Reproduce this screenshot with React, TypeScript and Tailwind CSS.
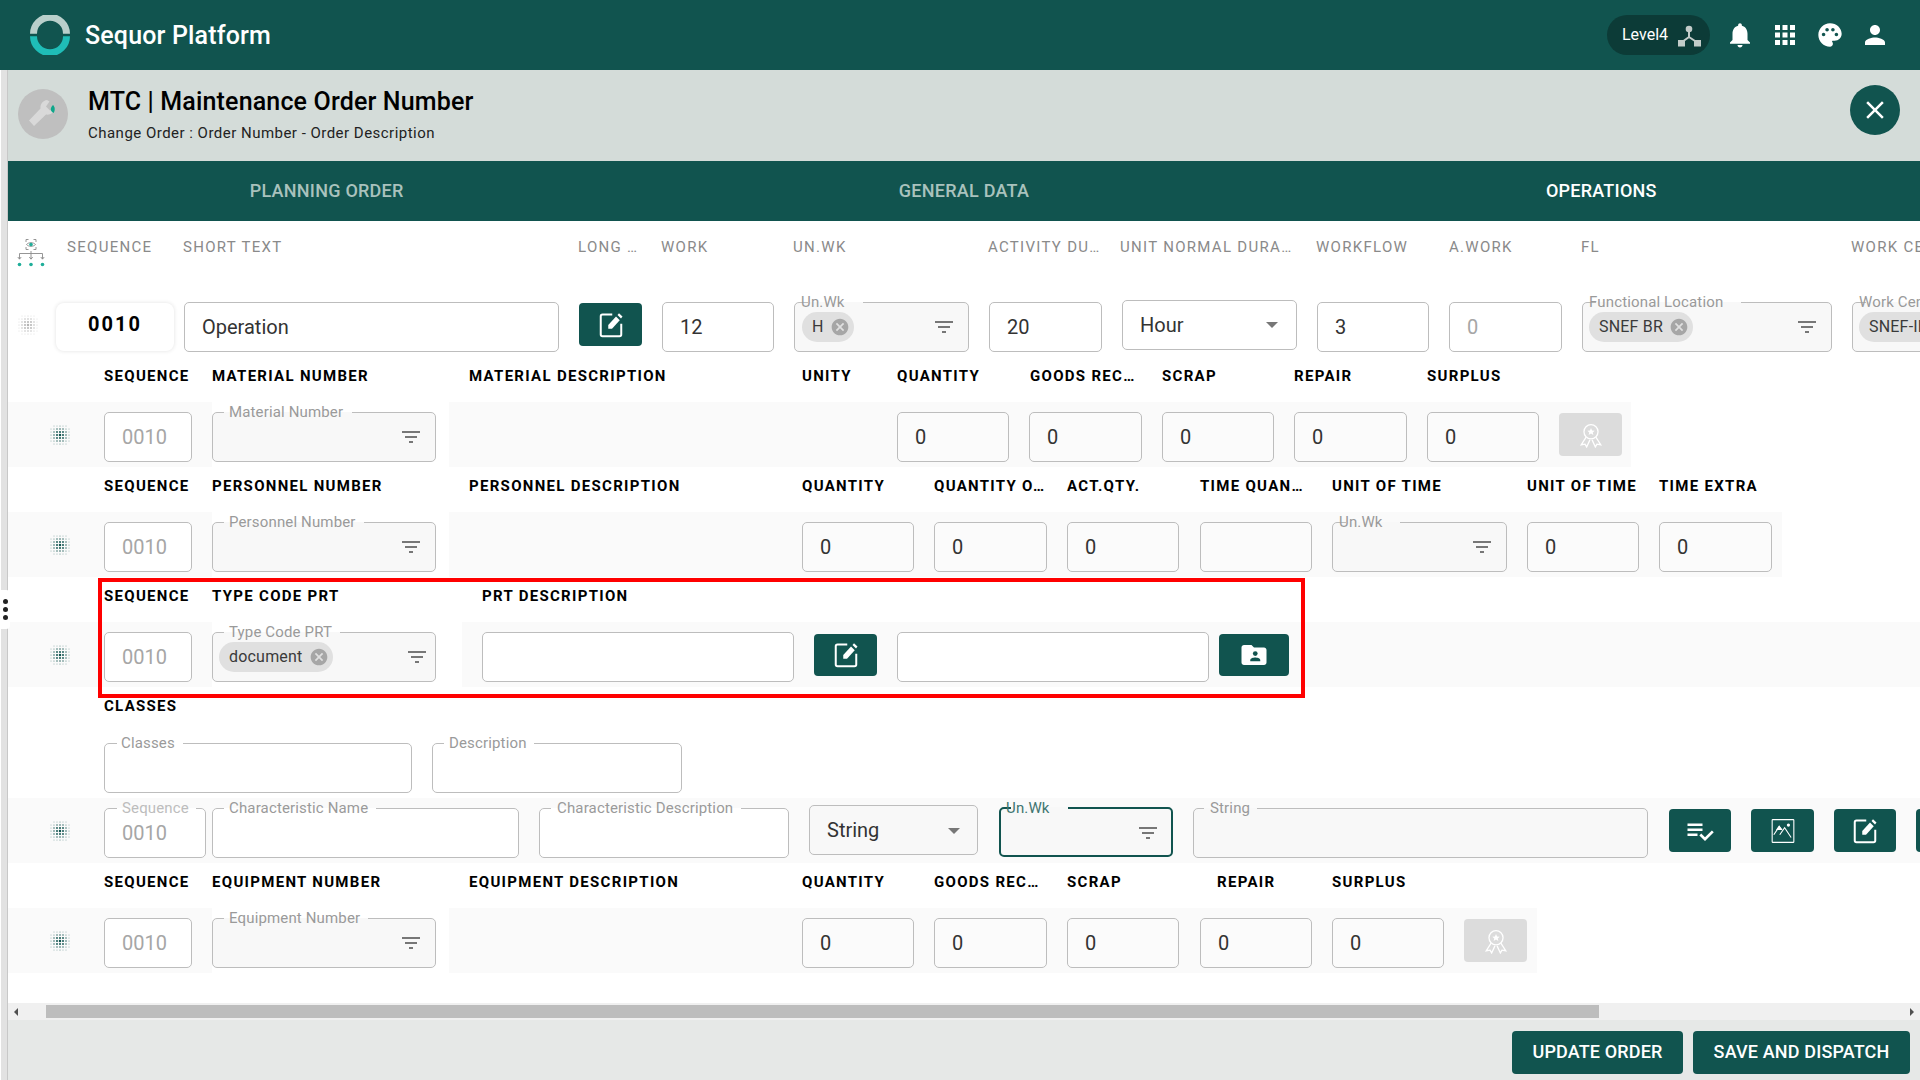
import React from "react";

const P = {
  bell: "M12 22c1.1 0 2-.9 2-2h-4c0 1.1.89 2 2 2zm6-6v-5c0-3.07-1.64-5.64-4.5-6.32V4c0-.83-.67-1.5-1.5-1.5s-1.5.67-1.5 1.5v.68C7.63 5.36 6 7.92 6 11v5l-2 2v1h16v-1l-2-2z",
  apps: "M4 8h4V4H4v4zm6 12h4v-4h-4v4zm-6 0h4v-4H4v4zm0-6h4v-4H4v4zm6 0h4v-4h-4v4zm6-10v4h4V4h-4zm-6 4h4V4h-4v4zm6 6h4v-4h-4v4zm0 6h4v-4h-4v4z",
  palette: "M12 2C6.49 2 2 6.49 2 12s4.49 10 10 10c1.38 0 2.5-1.12 2.5-2.5 0-.61-.23-1.2-.64-1.67-.08-.1-.13-.21-.13-.33 0-.28.22-.5.5-.5H16c3.31 0 6-2.69 6-6 0-4.96-4.49-9-10-9zM6.5 13c-.83 0-1.5-.67-1.5-1.5S5.67 10 6.5 10s1.5.67 1.5 1.5S7.33 13 6.5 13zm3-4C8.67 9 8 8.33 8 7.5S8.67 6 9.5 6s1.5.67 1.5 1.5S10.33 9 9.5 9zm5 0c-.83 0-1.5-.67-1.5-1.5S13.67 6 14.5 6s1.5.67 1.5 1.5S15.33 9 14.5 9zm3 4c-.83 0-1.5-.67-1.5-1.5s.67-1.5 1.5-1.5 1.5.67 1.5 1.5-.67 1.5-1.5 1.5z",
  person: "M12 12c2.21 0 4-1.79 4-4s-1.79-4-4-4-4 1.79-4 4 1.79 4 4 4zm0 2c-2.67 0-8 1.34-8 4v2h16v-2c0-2.66-5.33-4-8-4z",
  close: "M19 6.41 17.59 5 12 10.59 6.41 5 5 6.41 10.59 12 5 17.59 6.41 19 12 13.41 17.59 19 19 17.59 13.41 12z",
  cancel: "M12 2C6.47 2 2 6.47 2 12s4.47 10 10 10 10-4.47 10-10S17.53 2 12 2zm5 13.59L15.59 17 12 13.41 8.41 17 7 15.59 10.59 12 7 8.41 8.41 7 12 10.59 15.59 7 17 8.41 13.41 12 17 15.59z",
  filter: "M10 18h4v-2h-4v2zM3 6v2h18V6H3zm3 7h12v-2H6v2z",
  check: "M14 10H2v2h12v-2zm0-4H2v2h12V6zM2 16h8v-2H2v2zm19.5-4.5L23 13l-6.99 7-4.51-4.5L13 14l3.01 3 5.49-5.5z",
};

function Mui({ d, size, cls }: { d: string; size: number; cls: string }) {
  return (
    <svg width={size} height={size} viewBox="0 0 24 24" className={cls} fill="currentColor">
      <path d={d} />
    </svg>
  );
}

function Grip({ color }: { color: string }) {
  const r = [-3, -2, -1, 0, 1, 2, 3];
  return (
    <svg width="24" height="24" viewBox="-12 -12 24 24" fill={color} className="shrink-0">
      {r.flatMap((a) =>
        r.map((b) => {
          const d = Math.sqrt(a * a + b * b);
          const s = d > 3.7 ? 0 : Math.max(0.45, 1.25 - 0.25 * d);
          return <circle key={`${a}${b}`} cx={a * 3} cy={b * 3} r={s} opacity={d > 2.5 ? 0.75 : 1} />;
        })
      )}
    </svg>
  );
}

function EditIcon() {
  return (
    <svg width="30" height="30" viewBox="0 0 24 24" className="text-white">
      <path d="M13 3.6H5.2A1.4 1.4 0 0 0 3.8 5v14.6A1.4 1.4 0 0 0 5.2 21h13.6a1.4 1.4 0 0 0 1.4-1.4V11" fill="none" stroke="currentColor" strokeWidth="1.6" />
      <path d="M9.8 15v-3.1L16 5.2l3 3-6.2 6.8z" fill="currentColor" />
      <path d="M17.2 4l1.2-1.4 2.8 2.6L20 6.8z" fill="currentColor" />
    </svg>
  );
}

function FolderIcon() {
  return (
    <svg width="30" height="30" viewBox="0 0 24 24">
      <path d="M20 6h-8l-2-2H4c-1.1 0-2 .9-2 2v12c0 1.1.9 2 2 2h16c1.1 0 2-.9 2-2V8c0-1.1-.9-2-2-2z" fill="#fff" />
      <circle cx="13" cy="10.800" r="1.900" fill="#11544f" />
      <path d="M9 17v-1c0-1.400 2.700-2 4-2s4 .6 4 2v1z" fill="#11544f" />
    </svg>
  );
}

function ImageIcon() {
  return (
    <svg width="26" height="26" viewBox="0 0 24 24" fill="none" stroke="#fff" strokeWidth="1">
      <rect x="2" y="1.500" width="20" height="21" rx="0.6" />
      <path d="M3.500 15.500 8.500 8l2.500 3M9 15.500l4.500-6.500 6 9" />
      <path d="M6.500 10.500 8.500 7.500l2 3z" fill="#fff" />
      <circle cx="17" cy="6.500" r="1.500" fill="#fff" stroke="none" />
    </svg>
  );
}

function AwardIcon() {
  return (
    <svg width="26" height="26" viewBox="0 0 24 24" fill="none" stroke="#fff" strokeWidth="1.200">
      <circle cx="12" cy="9" r="6.500" />
      <path d="M12 5.500l1 2.300 2.400.2-1.800 1.600.6 2.400-2.200-1.300-2.200 1.300.6-2.400L8.600 8l2.400-.2z" fill="#fff" stroke="none" />
      <path d="M7.500 14 3 21l3.500-.6L8 23l3-6.500M16.500 14l4.500 7-3.500-.6L16 23l-3-6.500" />
    </svg>
  );
}

function Tree() {
  return (
    <svg width="28" height="29" viewBox="0 0 28 29" fill="none" stroke="#8a8a8a" strokeWidth="0.9" className="shrink-0">
      <path d="M9 4V1.500h2.500M16.500 1.500H19V4M9 9v2.500h2.500M16.500 11.500H19V9" />
      <path d="M9.500 6.500c2-2.400 7-2.400 9 0-2 2.400-7 2.400-9 0z" />
      <circle cx="14" cy="6.500" r="1.800" fill="#1fae9a" stroke="none" />
      <path d="M14 13v8M2.500 21v-5.500h23V21M.8 19l1.700 2.200L4.200 19M12.300 19l1.700 2.200 1.700-2.200M23.800 19l1.700 2.200 1.700-2.200" />
      <circle cx="2.500" cy="26.500" r="1.800" fill="#1fae9a" stroke="none" />
      <circle cx="14" cy="26.500" r="1.800" fill="#1fae9a" stroke="none" />
      <circle cx="25.500" cy="26.500" r="1.800" fill="#1fae9a" stroke="none" />
    </svg>
  );
}

function Logo() {
  return (
    <svg width="40" height="40" viewBox="0 0 40 40" fill="none" strokeWidth="7" className="shrink-0">
      <path d="M3.500 18.800A16.500 16.500 0 0 1 36.500 18.800" stroke="#b9cfcb" />
      <path d="M3.500 21.200A16.500 16.500 0 0 0 36.500 21.200" stroke="#1fbdb7" />
    </svg>
  );
}

function Wrench() {
  return (
    <div className="w-[50px] h-[50px] rounded-full bg-[#bfbfbf] shrink-0 flex items-center justify-center mt-[2px]">
      <svg width="36" height="36" viewBox="0 0 36 36">
        <path d="M22 4c-4 .6-7 4-6.500 8.500L4 24.500 9 30l12-11.500c4 .8 8-2 9-6l-5 2-4-4 3.500-5z" fill="#d9d9d9" />
        <path d="M28 9c2 2 2.500 5 .5 8-3-1.500-4-4.500-.5-8z" fill="#0fa68a" />
      </svg>
    </div>
  );
}

function Head({ cls, bold, children }: { cls: string; bold?: boolean; children: React.ReactNode }) {
  return (
    <div className={`shrink-0 whitespace-nowrap tracking-[1.3px] text-[15px] ${bold ? "font-bold text-black" : "text-[#8a8a8a]"} ${cls}`}>
      {children}
    </div>
  );
}

function HeadRow({ cls, children }: { cls: string; children: React.ReactNode }) {
  return <div className={`flex items-center h-[38px] w-max ${cls}`}>{children}</div>;
}

function Box({ cls, value, dim, bg = "bg-white" }: { cls: string; value?: string; dim?: boolean; bg?: string }) {
  return (
    <div className={`shrink-0 h-[50px] pl-[17px] flex items-center rounded-[5px] border border-[#bdbdbd] text-[20px] ${dim ? "text-[#a6a6a6]" : "text-[#333]"} ${bg} ${cls}`}>
      {value}
    </div>
  );
}

function Outlined({
  cls, label, labelCls, notchCls, bg = "bg-white", dim, focus, children,
}: {
  cls: string; label: string; labelCls: string; notchCls: string; bg?: string; dim?: boolean; focus?: boolean; children?: React.ReactNode;
}) {
  return (
    <div className={`relative shrink-0 h-[50px] ${cls}`}>
      <fieldset className={`absolute inset-x-0 bottom-0 -top-[5px] rounded-[5px] ${focus ? "border-2 border-[#11544f]" : "border border-[#bdbdbd]"} ${bg}`}>
        <legend className={`h-[11px] p-0 ${notchCls}`} />
      </fieldset>
      <span className={`absolute ${focus ? "-top-[9px]" : "-top-[10px]"} h-[20px] leading-[20px] text-[15px] tracking-[0.15px] whitespace-nowrap ${focus ? "text-[#3f7571]" : dim ? "text-[#bdbdbd]" : "text-[#9a9a9a]"} ${labelCls}`}>
        {label}
      </span>
      <div className="absolute inset-0 flex items-center">{children}</div>
    </div>
  );
}

function Filter({ cls }: { cls: string }) {
  return <Mui d={P.filter} size={24} cls={`absolute text-[#777] ${cls}`} />;
}

function Chip({ text, cls }: { text: string; cls: string }) {
  return (
    <span className={`h-[30px] rounded-full bg-[#e0e0e0] flex items-center pl-[10px] pr-[4px] gap-[6px] text-[16px] tracking-[0.2px] text-[#3a3a3a] whitespace-nowrap ${cls}`}>
      {text}
      <Mui d={P.cancel} size={20} cls="text-[#a6a6a6]" />
    </span>
  );
}

function Btn({ cls, children, off, top = "mt-[11px] h-[43px]" }: { cls: string; children: React.ReactNode; off?: boolean; top?: string }) {
  return (
    <div className={`shrink-0 rounded-[4px] flex items-center justify-center ${top} ${off ? "bg-[#dcdcdc]" : "bg-[#11544f]"} ${cls}`}>
      {children}
    </div>
  );
}

function Band({ cls, children }: { cls: string; children: React.ReactNode }) {
  return <div className={`flex items-start h-[65px] bg-[#fafafa] ${cls}`}>{children}</div>;
}

function GripCell() {
  return (
    <div className="w-[96px] shrink-0 pl-[40px] pt-[21px]">
      <Grip color="#11544f" />
    </div>
  );
}

function NumBoxes({ list }: { list: { cls: string; v?: string }[] }) {
  return (
    <>
      {list.map((b, i) => (
        <Box key={i} cls={`mt-[10px] ${b.cls}`} value={b.v} bg="bg-[#fbfbfb]" />
      ))}
    </>
  );
}

export default function App() {
  return (
    <div className="relative w-[1920px] h-[1080px] overflow-hidden flex flex-col bg-white font-['Roboto',sans-serif]">
      <header className="h-[70px] shrink-0 bg-[#11544f] flex items-center pl-[30px] text-white">
        <Logo />
        <span className="ml-[15px] mt-[2px] text-[25px] font-medium tracking-[0.16px]">Sequor Platform</span>
        <div className="ml-auto flex items-center">
          <div className="w-[103px] h-[40px] rounded-full bg-[#0c3b37] flex items-center pl-[15px] text-[16px]">
            Level4
            <svg width="24" height="24" viewBox="0 0 24 24" className="ml-[9px] mt-[1px]" fill="#c3ccc9" stroke="#c3ccc9">
              <circle cx="12" cy="5" r="3.300" stroke="none" />
              <rect x="1" y="16" width="7" height="6.500" stroke="none" />
              <rect x="17" y="16" width="7" height="6.500" stroke="none" />
              <path d="M12 7v6L5 18M12 13l7.500 5" fill="none" strokeWidth="2" />
            </svg>
          </div>
          <Mui d={P.bell} size={30} cls="ml-[15px]" />
          <Mui d={P.apps} size={30} cls="ml-[15px]" />
          <Mui d={P.palette} size={28} cls="ml-[16px]" />
          <Mui d={P.person} size={30} cls="ml-[16px] mr-[30px]" />
        </div>
      </header>

      <div className="flex flex-1 min-h-0">
        <div className="w-[8px] shrink-0 bg-[#e2e2e2] border-l border-l-white border-r border-r-[#c8c8c8]" />
        <main className="flex-1 min-w-0 flex flex-col">
          <section className="h-[91px] shrink-0 bg-[#d4dcd9] flex items-center pl-[10px] pr-[20px] pb-[6px]">
            <Wrench />
            <div className="ml-[20px] mt-[4px]">
              <div className="text-[25px] font-medium text-black leading-[30px] tracking-[0.16px]">MTC | Maintenance Order Number</div>
              <div className="text-[15px] text-[#222] leading-[20px] mt-[6px] tracking-[0.48px]">Change Order : Order Number - Order Description</div>
            </div>
            <div className="ml-auto -mt-[5px] w-[50px] h-[50px] rounded-full bg-[#11544f] flex items-center justify-center">
              <Mui d={P.close} size={30} cls="text-white" />
            </div>
          </section>

          <nav className="h-[60px] shrink-0 bg-[#11544f] grid grid-cols-3 items-center text-center text-[18px] font-medium tracking-[0.25px] pb-[2px]">
            <span className="text-[#a9c2bd]">PLANNING ORDER</span>
            <span className="text-[#a9c2bd]">GENERAL DATA</span>
            <span className="text-white">OPERATIONS</span>
          </nav>

          <div className="relative flex-1 min-h-0 overflow-hidden">
            {/* column titles */}
            <div className="flex items-start h-[79px] w-max pt-[17px]">
              <div className="w-[59px] shrink-0 pl-[9px]"><Tree /></div>
              <div className="flex items-center h-[18px]">
                <Head cls="w-[116px]">SEQUENCE</Head>
                <Head cls="w-[395px]">SHORT TEXT</Head>
                <Head cls="w-[83px]">LONG …</Head>
                <Head cls="w-[132px]">WORK</Head>
                <Head cls="w-[195px]">UN.WK</Head>
                <Head cls="w-[132px]">ACTIVITY DU…</Head>
                <Head cls="w-[196px]">UNIT NORMAL DURA…</Head>
                <Head cls="w-[133px]">WORKFLOW</Head>
                <Head cls="w-[132px]">A.WORK</Head>
                <Head cls="w-[270px]">FL</Head>
                <Head cls="w-[200px]">WORK CENTER</Head>
              </div>
            </div>

            {/* operation row */}
            <div className="flex items-start h-[56px] w-max">
              <div className="w-[48px] shrink-0 pl-[8px] pt-[13px]"><Grip color="#b5b5b5" /></div>
              <div className="w-[118px] h-[48px] mt-[3px] pb-[6px] shrink-0 rounded-[8px] bg-white shadow-[0_0_4px_rgba(0,0,0,0.12)] flex items-center justify-center text-[20px] font-bold tracking-[2px] text-black">0010</div>
              <Box cls="ml-[10px] w-[375px] mt-[2px]" value="Operation" />
              <div className="ml-[20px] w-[63px] h-[43px] mt-[3px] rounded-[4px] bg-[#11544f] flex items-center justify-center shrink-0"><EditIcon /></div>
              <Box cls="ml-[20px] w-[112px] mt-[2px]" value="12" />
              <Outlined cls="ml-[20px] w-[175px] mt-[2px]" bg="bg-[#f8f8f8]" label="Un.Wk" labelCls="left-[7px]" notchCls="ml-[13px] w-[55px]">
                <Chip text="H" cls="ml-[8px] -mt-[1px]" />
                <Filter cls="right-[13px] top-[13px]" />
              </Outlined>
              <Box cls="ml-[20px] w-[113px] mt-[2px]" value="20" />
              <div className="ml-[20px] w-[175px] h-[50px] shrink-0 rounded-[5px] border border-[#bdbdbd] bg-white flex items-center pl-[17px] text-[20px] text-[#333] relative">
                Hour
                <span className="absolute right-[18px] top-[21px] w-0 h-0 border-x-[6px] border-x-transparent border-t-[6px] border-t-[#777]" />
              </div>
              <Box cls="ml-[20px] w-[112px] mt-[2px]" value="3" />
              <Box cls="ml-[20px] w-[113px] mt-[2px]" value="0" dim />
              <Outlined cls="ml-[20px] w-[250px] mt-[2px]" bg="bg-[#f8f8f8]" label="Functional Location" labelCls="left-[7px]" notchCls="ml-[13px] w-[145px]">
                <Chip text="SNEF BR" cls="ml-[7px] -mt-[1px]" />
                <Filter cls="right-[13px] top-[13px]" />
              </Outlined>
              <Outlined cls="ml-[20px] w-[250px] mt-[2px]" bg="bg-[#f8f8f8]" label="Work Center" labelCls="left-[7px]" notchCls="ml-[13px] w-[100px]">
                <Chip text="SNEF-IND" cls="ml-[7px] -mt-[1px]" />
              </Outlined>
            </div>

            {/* material */}
            <div className="h-[46px] pt-[1px]">
              <HeadRow cls="pl-[96px]">
                <Head bold cls="w-[108px]">SEQUENCE</Head>
                <Head bold cls="w-[257px]">MATERIAL NUMBER</Head>
                <Head bold cls="w-[333px]">MATERIAL DESCRIPTION</Head>
                <Head bold cls="w-[95px]">UNITY</Head>
                <Head bold cls="w-[133px]">QUANTITY</Head>
                <Head bold cls="w-[132px]">GOODS REC…</Head>
                <Head bold cls="w-[132px]">SCRAP</Head>
                <Head bold cls="w-[133px]">REPAIR</Head>
                <Head bold cls="w-[112px]">SURPLUS</Head>
              </HeadRow>
            </div>
            <Band cls="w-[1623px]">
              <GripCell />
              <Box cls="w-[88px] mt-[10px]" value="0010" dim />
              <div className="ml-[20px] w-[237px] h-full pt-[10px] bg-white shrink-0">
                <Outlined cls="w-[224px]" bg="bg-[#f8f8f8]" label="Material Number" labelCls="left-[17px]" notchCls="ml-[11px] w-[128px]">
                  <Filter cls="right-[13px] top-[13px]" />
                </Outlined>
              </div>
              <div className="w-[448px] shrink-0" />
              <NumBoxes list={[{ cls: "w-[112px]", v: "0" }, { cls: "ml-[20px] w-[113px]", v: "0" }, { cls: "ml-[20px] w-[112px]", v: "0" }, { cls: "ml-[20px] w-[113px]", v: "0" }, { cls: "ml-[20px] w-[112px]", v: "0" }]} />
              <Btn off cls="ml-[20px] w-[63px]"><AwardIcon /></Btn>
            </Band>

            {/* personnel */}
            <HeadRow cls="pl-[96px] h-[45px] pb-[7px]">
              <Head bold cls="w-[108px]">SEQUENCE</Head>
              <Head bold cls="w-[257px]">PERSONNEL NUMBER</Head>
              <Head bold cls="w-[333px]">PERSONNEL DESCRIPTION</Head>
              <Head bold cls="w-[132px]">QUANTITY</Head>
              <Head bold cls="w-[133px]">QUANTITY O…</Head>
              <Head bold cls="w-[133px]">ACT.QTY.</Head>
              <Head bold cls="w-[132px]">TIME QUAN…</Head>
              <Head bold cls="w-[195px]">UNIT OF TIME</Head>
              <Head bold cls="w-[132px]">UNIT OF TIME</Head>
              <Head bold cls="w-[122px]">TIME EXTRA</Head>
            </HeadRow>
            <Band cls="w-[1774px]">
              <GripCell />
              <Box cls="w-[88px] mt-[10px]" value="0010" dim />
              <div className="ml-[20px] w-[237px] h-full pt-[10px] bg-white shrink-0">
                <Outlined cls="w-[224px]" bg="bg-[#f8f8f8]" label="Personnel Number" labelCls="left-[17px]" notchCls="ml-[11px] w-[140px]">
                  <Filter cls="right-[13px] top-[13px]" />
                </Outlined>
              </div>
              <div className="w-[353px] shrink-0" />
              <NumBoxes list={[{ cls: "w-[112px]", v: "0" }, { cls: "ml-[20px] w-[113px]", v: "0" }, { cls: "ml-[20px] w-[112px]", v: "0" }, { cls: "ml-[21px] w-[112px]" }]} />
              <Outlined cls="ml-[20px] w-[175px] mt-[10px]" bg="bg-[#f8f8f8]" label="Un.Wk" labelCls="left-[7px]" notchCls="ml-[13px] w-[54px]">
                <Filter cls="right-[13px] top-[13px]" />
              </Outlined>
              <NumBoxes list={[{ cls: "ml-[20px] w-[112px]", v: "0" }, { cls: "ml-[20px] w-[113px]", v: "0" }]} />
            </Band>

            {/* PRT */}
            <HeadRow cls="pl-[96px] h-[45px] pb-[7px]">
              <Head bold cls="w-[108px]">SEQUENCE</Head>
              <Head bold cls="w-[270px]">TYPE CODE PRT</Head>
              <Head bold cls="w-[400px]">PRT DESCRIPTION</Head>
            </HeadRow>
            <Band cls="w-[1912px]">
              <GripCell />
              <Box cls="w-[88px] mt-[10px]" value="0010" dim />
              <div className="ml-[20px] w-[250px] h-full pt-[10px] bg-white shrink-0">
                <Outlined cls="w-[224px]" bg="bg-[#f8f8f8]" label="Type Code PRT" labelCls="left-[17px]" notchCls="ml-[11px] w-[116px]">
                  <Chip text="document" cls="ml-[7px]" />
                  <Filter cls="right-[7px] top-[13px]" />
                </Outlined>
              </div>
              <Box cls="ml-[20px] w-[312px] mt-[10px]" />
              <Btn top="mt-[12px] h-[42px]" cls="ml-[20px] w-[63px]"><EditIcon /></Btn>
              <Box cls="ml-[20px] w-[312px] mt-[10px]" />
              <Btn top="mt-[12px] h-[42px]" cls="ml-[10px] w-[70px]"><FolderIcon /></Btn>
            </Band>

            {/* classes */}
            <HeadRow cls="pl-[96px] h-[45px] pb-[7px]">
              <Head bold cls="w-[200px]">CLASSES</Head>
            </HeadRow>
            <div className="flex pl-[96px] mt-[11px] mb-[5px]">
              <Outlined cls="w-[308px]" label="Classes" labelCls="left-[17px]" notchCls="ml-[12px] w-[66px]" />
              <Outlined cls="ml-[20px] w-[250px]" label="Description" labelCls="left-[17px]" notchCls="ml-[11px] w-[90px]" />
            </div>
            <Band cls="w-[1912px]">
              <GripCell />
              <Outlined cls="w-[102px] mt-[10px]" label="Sequence" labelCls="left-[18px]" notchCls="ml-[12px] w-[79px]" dim>
                <span className="pl-[18px] text-[20px] text-[#a6a6a6]">0010</span>
              </Outlined>
              <Outlined cls="ml-[6px] w-[307px] mt-[10px]" label="Characteristic Name" labelCls="left-[17px]" notchCls="ml-[11px] w-[152px]" />
              <Outlined cls="ml-[20px] w-[250px] mt-[10px]" label="Characteristic Description" labelCls="left-[18px]" notchCls="ml-[11px] w-[190px]" />
              <div className="ml-[20px] w-[169px] h-[50px] mt-[7px] shrink-0 rounded-[5px] border border-[#bdbdbd] bg-[#f8f8f8] flex items-center pl-[17px] text-[20px] text-[#333] relative">
                String
                <span className="absolute right-[17px] top-[22px] w-0 h-0 border-x-[6px] border-x-transparent border-t-[6px] border-t-[#777]" />
              </div>
              <Outlined focus cls="ml-[21px] w-[174px] mt-[9px]" bg="bg-[#f8f8f8]" label="Un.Wk" labelCls="left-[7px]" notchCls="ml-[10px] w-[57px]">
                <Filter cls="right-[13px] top-[14px]" />
              </Outlined>
              <Outlined cls="ml-[20px] w-[455px] mt-[10px]" bg="bg-[#f8f8f8]" label="String" labelCls="left-[17px]" notchCls="ml-[10px] w-[53px]" />
              <Btn cls="ml-[21px] w-[62px]"><Mui d={P.check} size={30} cls="text-white" /></Btn>
              <Btn cls="ml-[20px] w-[63px]"><ImageIcon /></Btn>
              <Btn cls="ml-[20px] w-[62px]"><EditIcon /></Btn>
              <Btn cls="ml-[20px] w-[62px]"><EditIcon /></Btn>
            </Band>

            {/* equipment */}
            <HeadRow cls="pl-[96px] h-[45px] pb-[7px]">
              <Head bold cls="w-[108px]">SEQUENCE</Head>
              <Head bold cls="w-[257px]">EQUIPMENT NUMBER</Head>
              <Head bold cls="w-[333px]">EQUIPMENT DESCRIPTION</Head>
              <Head bold cls="w-[132px]">QUANTITY</Head>
              <Head bold cls="w-[133px]">GOODS REC…</Head>
              <Head bold cls="w-[150px]">SCRAP</Head>
              <Head bold cls="w-[115px]">REPAIR</Head>
              <Head bold cls="w-[122px]">SURPLUS</Head>
            </HeadRow>
            <Band cls="w-[1529px]">
              <GripCell />
              <Box cls="w-[88px] mt-[10px]" value="0010" dim />
              <div className="ml-[20px] w-[237px] h-full pt-[10px] bg-white shrink-0">
                <Outlined cls="w-[224px]" bg="bg-[#f8f8f8]" label="Equipment Number" labelCls="left-[17px]" notchCls="ml-[11px] w-[144px]">
                  <Filter cls="right-[13px] top-[13px]" />
                </Outlined>
              </div>
              <div className="w-[353px] shrink-0" />
              <NumBoxes list={[{ cls: "w-[112px]", v: "0" }, { cls: "ml-[20px] w-[113px]", v: "0" }, { cls: "ml-[20px] w-[112px]", v: "0" }, { cls: "ml-[21px] w-[112px]", v: "0" }, { cls: "ml-[20px] w-[112px]", v: "0" }]} />
              <Btn off cls="ml-[20px] w-[63px]"><AwardIcon /></Btn>
            </Band>

            {/* red annotation */}
            <div className="absolute left-[90px] top-[357px] w-[1207px] h-[120px] border-[4px] border-[#ff0000] pointer-events-none" />
          </div>

          <div className="h-[17px] shrink-0 bg-[#f0f0f0] relative">
            <div className="ml-[38px] mt-[2px] w-[1553px] h-[13px] bg-[#bdbdbd]" />
            <span className="absolute left-[6px] top-[5px] w-0 h-0 border-y-[4px] border-y-transparent border-r-[4px] border-r-[#505050]" />
            <span className="absolute right-[6px] top-[5px] w-0 h-0 border-y-[4px] border-y-transparent border-l-[4px] border-l-[#505050]" />
          </div>

          <footer className="h-[60px] shrink-0 bg-[#e6e8e7] flex justify-end items-start pt-[11px] pr-[10px] gap-[10px] text-white text-[18px] font-medium tracking-[0.15px]">
            <div className="w-[171px] h-[43px] pb-[2px] rounded-[4px] bg-[#11544f] flex items-center justify-center">UPDATE ORDER</div>
            <div className="w-[217px] h-[43px] pb-[2px] rounded-[4px] bg-[#11544f] flex items-center justify-center">SAVE AND DISPATCH</div>
          </footer>
        </main>
      </div>

      {/* side handle */}
      <div className="absolute left-0 top-[590px] w-[10px] h-[39px] bg-white rounded-r-[4px] flex flex-col items-center justify-center gap-[3px]">
        <span className="w-[5px] h-[5px] rounded-full bg-[#222]" />
        <span className="w-[5px] h-[5px] rounded-full bg-[#222]" />
        <span className="w-[5px] h-[5px] rounded-full bg-[#222]" />
      </div>
    </div>
  );
}
